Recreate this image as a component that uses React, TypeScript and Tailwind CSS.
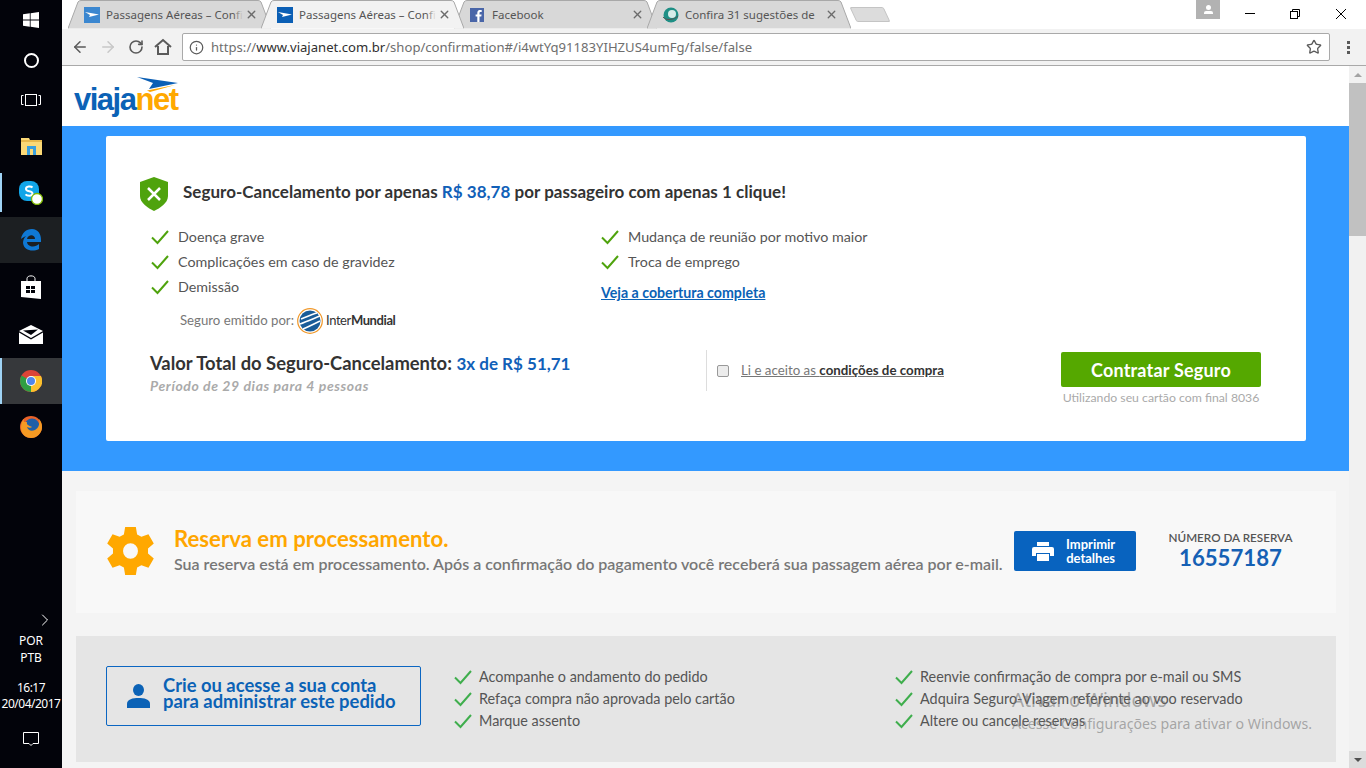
import React from "react";
import { ArrowLeft, ArrowRight, RotateCw, Info, Star, X, ChevronRight } from "lucide-react";

const UI = "font-['Lato','Liberation_Sans',sans-serif]";

function Check({ className = "text-[#4fa30d]" }: { className?: string }) {
  return (
    <svg width="18" height="16" viewBox="0 0 18 16" className={`shrink-0 ${className}`}>
      <path d="M1 8.5 L6.5 14 L17 2" fill="none" stroke="currentColor" strokeWidth="2" />
    </svg>
  );
}

function WindowsIcon() {
  return (
    <svg width="16" height="16" viewBox="0 0 16 16" fill="#fff">
      <path d="M0 2.3 6.8 1.3V7.5H0ZM7.6 1.2 16 0V7.5H7.6ZM0 8.4H6.8V14.7L0 13.7ZM7.6 8.4H16V16L7.6 14.8Z" />
    </svg>
  );
}

function TaskIcon({ h, bg = "", bar = "", children }: { h: string; bg?: string; bar?: string; children: React.ReactNode }) {
  return (
    <div className={`relative w-full flex items-center justify-center ${bg}`} style={{ height: h }}>
      {bar && <div className={`absolute left-0 w-[2px] bg-[#9fd3f5] ${bar}`} />}
      {children}
    </div>
  );
}

function Sidebar() {
  return (
    <div className="w-[62px] h-full shrink-0 bg-[#02030a] flex flex-col items-center text-white font-['Noto_Sans',sans-serif]">
      <div className="h-[40px] w-full flex items-center justify-center"><WindowsIcon /></div>
      <div className="h-[40px] w-full flex items-center justify-center">
        <div className="w-[15px] h-[15px] rounded-full border-2 border-white" />
      </div>
      <div className="h-[40px] w-full flex items-center justify-center">
        <svg width="20" height="14" viewBox="0 0 20 14" fill="none" stroke="#fff">
          <rect x="4.5" y="1.5" width="11" height="11" />
          <path d="M2.5 2.5H.5V11.5H2.5M17.5 2.5H19.5V11.5H17.5" />
        </svg>
      </div>
      <div className="h-[3px] shrink-0" />
      <TaskIcon h="46px">
        <svg width="21" height="18" viewBox="0 0 21 18">
          <path d="M0 1H8L9 3H21V18H0Z" fill="#fbd976" />
          <rect x="0" y="3" width="21" height="2" fill="#e8b94c" />
          <path d="M6 9H15V18H12V12H9V18H6Z" fill="#3aa0dd" />
        </svg>
      </TaskIcon>
      <TaskIcon h="48px" bar="top-[4px] bottom-[5px]">
        <svg width="24" height="24" viewBox="0 0 24 24">
          <rect x="0" y="0" width="20" height="20" rx="8" fill="#11a5e8" />
          <path d="M13.5 6.5C12 5 7 5 7 8c0 3 6.5 1.5 6.5 4.5 0 3-5.500 2.500-7 .8" fill="none" stroke="#fff" strokeWidth="2" />
          <circle cx="18" cy="18" r="5.500" fill="#fff" stroke="#7fba00" strokeWidth="1.300" />
        </svg>
      </TaskIcon>
      <TaskIcon h="46px" bg="bg-[#1c1f22]">
        <svg width="22" height="22" viewBox="0 0 22 22">
          <path d="M1 10C2 4 6 0 12 0c6 0 9 5 9 11v2H7c.500 5 8 6 12 2v5c-6 3-15 2-16-6 0-3 1-5 3-7-2 1-4 2-5 3Zm6 0h8c0-5-7-5-8 0Z" fill="#0f78d4" />
        </svg>
      </TaskIcon>
      <TaskIcon h="48px">
        <svg width="22" height="24" viewBox="0 0 22 24">
          <path d="M7 6V3.500C7 0 15 0 15 3.500V6" fill="none" stroke="#fff" />
          <path d="M1 6H21V24L1 22Z" fill="#fff" />
          <path d="M6 11H10V14H6ZM11 11H15V14H11ZM6 15H10V18H6ZM11 15H15V18H11Z" fill="#02030a" />
        </svg>
      </TaskIcon>
      <TaskIcon h="47px">
        <svg width="24" height="19" viewBox="0 0 24 19">
          <path d="M0 6 12 0 24 6 12 13Z" fill="#fff" />
          <path d="M0 7.500 12 14.500 24 7.500V19H0Z" fill="#fff" />
          <path d="M4 5.500 19 4.500 12 10Z" fill="#02030a" />
        </svg>
      </TaskIcon>
      <TaskIcon h="46px" bg="bg-[#36383b]" bar="top-0 bottom-0">
        <svg width="22" height="22" viewBox="0 0 22 22">
          <circle cx="11" cy="11" r="11" fill="#dc4437" />
          <path d="M11 11 1.500 5.500A11 11 0 0 0 11 22Z" fill="#2f9e44" />
          <path d="M11 11V22A11 11 0 0 0 21 6H11Z" fill="#fbc02d" />
          <circle cx="11" cy="11" r="5" fill="#fff" />
          <circle cx="11" cy="11" r="4" fill="#4f86ec" />
        </svg>
      </TaskIcon>
      <TaskIcon h="46px">
        <svg width="24" height="24" viewBox="0 0 24 24">
          <circle cx="12" cy="12" r="11" fill="#e8622a" />
          <circle cx="13" cy="11" r="7.500" fill="#1f5fa8" />
          <path d="M2 13C2 20 8 23 12 23c6 0 11-5 11-11 0-3-1-6-3-8 1 4 0 9-4 11-4 2-7 0-8-3 2 1 4 1 5 0-2-1-6-2-5-5L5 7C4 4 6 3 6 3 3 5 2 9 2 13Z" fill="#f59a23" />
        </svg>
      </TaskIcon>
      <div className="mt-auto flex flex-col items-center">
        <ChevronRight size={20} strokeWidth={1.200} className="ml-[28px] mb-[2px]" />
        <div className="text-[12px] leading-[17px] text-center">POR<br />PTB</div>
        <div className="text-[12px] leading-[16px] text-center mt-[14px] whitespace-nowrap tracking-[-0.5px]">16:17<br />20/04/2017</div>
        <svg width="16" height="16" viewBox="0 0 16 16" fill="none" stroke="#fff" className="mt-[19px] mb-[21px]">
          <path d="M.5 1.500H15.500V12.500H10L8 14.500 6 12.500H.5Z" />
        </svg>
      </div>
    </div>
  );
}

function Tab({ title, active, icon, width = 203 }: { title: string; active?: boolean; icon: React.ReactNode; width?: number }) {
  const fill = active ? "#f2f2f2" : "#d8d8d8";
  return (
    <div className={`relative h-[29px] -mr-[10px] flex items-center pl-[16px] pr-[13px] ${active ? "z-10" : ""}`} style={{ width }}>
      <svg className="absolute inset-0" width={width} height="29" viewBox={`0 0 ${width} 29`}>
        <path
          d={`M0 28.500 L10 2 Q11 .5 13 .5 H${width - 13} Q${width - 11} .5 ${width - 10} 2 L${width} 28.500`}
          fill={fill}
          stroke="#a8a8a8"
        />
      </svg>
      <div className="relative w-[16px] h-[16px] shrink-0">{icon}</div>
      <span className="relative ml-[6px] flex-1 overflow-hidden whitespace-nowrap text-[11.500px] text-[#555] font-['Noto_Sans',sans-serif]">
        {title}
        <span
          className="absolute right-0 top-0 bottom-0 w-[10px]"
          style={{ background: `linear-gradient(to right, ${fill}00, ${fill})` }}
        />
      </span>
      <X size={13} strokeWidth={2.500} className="relative shrink-0 ml-[2px] text-[#6b6b6b]" />
    </div>
  );
}

function PlaneFavicon({ bg }: { bg: string }) {
  return (
    <svg width="16" height="16" viewBox="0 0 16 16">
      <rect width="16" height="16" fill={bg} />
      <path d="M1 5 15 7.500 5 10 6 8Z" fill="#fff" />
      <path d="M1 5 5 7.500 6 8Z" fill="#f5b335" />
    </svg>
  );
}

function BrowserChrome() {
  return (
    <div className="shrink-0 bg-white">
      <div className="h-[29px] flex relative">
        <div className="flex pl-[6px] items-start">
          <Tab title="Passagens Aéreas – Confi" icon={<PlaneFavicon bg="#3b87d0" />} />
          <Tab title="Passagens Aéreas – Confi" active icon={<PlaneFavicon bg="#0b5fb5" />} />
          <Tab title="Facebook" icon={
            <svg width="16" height="16" viewBox="0 0 16 16">
              <rect width="14" height="14" y="1" fill="#4a66a8" />
              <path d="M9.500 15V9.500H11.300L11.600 7.400H9.500V6.100C9.500 5.400 9.800 5 10.600 5H11.700V3.100C10 2.800 7.300 2.800 7.300 5.800V7.400H5.600V9.500H7.300V15Z" fill="#fff" />
            </svg>
          } />
          <Tab title="Confira 31 sugestões de" width={204} icon={
            <svg width="16" height="16" viewBox="0 0 16 16">
              <circle cx="8" cy="8" r="7.500" fill="#1f8f85" />
              <circle cx="9" cy="7" r="4" fill="#d6ece8" />
              <path d="M0 10C3 14 11 13 15 9" fill="none" stroke="#555" />
            </svg>
          } />
          <div className="ml-[12px] mt-[7px] w-[34px] h-[15px] bg-[#dcdcdc] border border-[#c4c4c4] rounded-[2px] skew-x-[25deg]" />
        </div>
        <div className="ml-auto flex items-start mr-[2px]">
          <div className="w-[24px] h-[19px] bg-[#b2b2b2] flex flex-col items-center justify-center mr-[7px]">
            <div className="w-[5px] h-[5px] rounded-full bg-white" />
            <div className="w-[9px] h-[3px] mt-[1px] rounded-t-[2px] bg-white" />
          </div>
          <div className="w-[45px] h-[27px] flex items-center justify-center">
            <div className="w-[10px] h-[1px] bg-black" />
          </div>
          <div className="w-[46px] h-[27px] flex items-center justify-center">
            <svg width="10" height="10" viewBox="0 0 10 10" fill="none" stroke="#000">
              <rect x=".5" y="2.500" width="7" height="7" />
              <path d="M2.500 2.500V.5H9.500V7.500H7.500" />
            </svg>
          </div>
          <div className="w-[46px] h-[27px] flex items-center justify-center">
            <svg width="10" height="10" viewBox="0 0 10 10" stroke="#000"><path d="M0 0 10 10M10 0 0 10" /></svg>
          </div>
        </div>
      </div>
      <div className="h-[37px] bg-[#f2f2f2] border-b border-[#a9a9a9] flex items-center pl-[9px] pr-[16px]">
        <ArrowLeft size={18} strokeWidth={2} className="text-[#5a5a5a]" />
        <ArrowRight size={18} strokeWidth={2} className="ml-[10px] text-[#c8c8c8]" />
        <RotateCw size={16} strokeWidth={2.400} className="ml-[11px] text-[#5a5a5a]" />
        <svg width="18" height="18" viewBox="0 0 18 18" fill="none" stroke="#5a5a5a" strokeWidth="2" className="ml-[10px]">
          <path d="M1 9 9 2 17 9M4 8V16H14V8" />
        </svg>
        <div className="ml-[10px] flex-1 h-[28px] bg-white border border-[#a9a9a9] rounded-[2px] flex items-center pl-[6px] pr-[4px]">
          <Info size={15} strokeWidth={2} className="text-[#5a5a5a]" />
          <span className="ml-[7px] pt-[1px] text-[13.100px] text-[#6e6e6e] font-['Noto_Sans',sans-serif] whitespace-nowrap">
            https://<span className="text-[#303030]">www.viajanet.com.br</span>/shop/confirmation#/i4wtYq91183YIHZUS4umFg/false/false
          </span>
          <Star size={16} strokeWidth={2} className="ml-auto mr-[3px] text-[#5a5a5a]" />
        </div>
        <div className="ml-[17px] flex flex-col gap-[2px]">
          <div className="w-[3px] h-[3px] bg-[#5a5a5a]" />
          <div className="w-[3px] h-[3px] bg-[#5a5a5a]" />
          <div className="w-[3px] h-[3px] bg-[#5a5a5a]" />
        </div>
      </div>
    </div>
  );
}

function Logo() {
  return (
    <div className="relative h-[60px] w-[120px] ml-[12px]">
      <div className="absolute left-0 top-[14px] text-[31px] leading-[40px] font-bold tracking-[-1.500px] font-['Liberation_Sans',sans-serif]">
        <span className="text-[#0b62b6]">viaja</span><span className="text-[#ffa800]">net</span>
      </div>
      <svg width="42" height="15" viewBox="0 0 42 15" className="absolute left-[63px] top-[11px]">
        <path d="M0 0 41 6 12 12 16 6Z" fill="#0b5fb5" />
        <path d="M10 13.500 38 8 13 15Z" fill="#ffa800" />
      </svg>
    </div>
  );
}

function InsuranceCard() {
  return (
    <div className="bg-white rounded-[2px] h-[305px] pl-[34px] pr-[45px] pt-[41px]">
      <div className="flex items-center h-[33px]">
        <svg width="28" height="34" viewBox="0 0 28 34">
          <path d="M14 0 28 5V19C28 26 20 31 14 34 8 31 0 26 0 19V5Z" fill="#4fa30d" />
          <path d="M8 11 20 23M20 11 8 23" stroke="#fff" strokeWidth="2.500" />
        </svg>
        <h1 className="ml-[15px] mb-[4px] text-[17px] font-bold text-[#333] tracking-[0.02px]">
          Seguro-Cancelamento por apenas <span className="text-[#1160b8]">R$ 38,78</span> por passageiro com apenas 1 clique!
        </h1>
      </div>
      <div className="grid grid-cols-[450px_1fr] ml-[11px] mt-[14px] text-[14.300px] text-[#555]">
        <div className="flex flex-col">
          {["Doença grave", "Complicações em caso de gravidez", "Demissão"].map((t) => (
            <div key={t} className="h-[25px] flex items-center gap-[9px]"><Check />{t}</div>
          ))}
          <div className="flex items-center ml-[29px] mt-[9px] h-[25px] text-[13.200px] text-[#777]">
            Seguro emitido por:
            <svg width="26" height="26" viewBox="0 0 26 26" className="ml-[3px]">
              <circle cx="13" cy="13" r="12.300" fill="#fff" stroke="#f0982a" strokeWidth="1.200" />
              <circle cx="13" cy="13" r="10.500" fill="#1a5c98" />
              <path d="M4 11C9 9 16 6 20 5M3 16C9 14 18 10 23 8M6 21C11 19 19 15 23 13" stroke="#fff" strokeWidth="1.500" fill="none" />
            </svg>
            <span className="ml-[3px] text-[13px] tracking-[-0.4px] text-[#333]">Inter<b>Mundial</b></span>
          </div>
        </div>
        <div className="flex flex-col">
          {["Mudança de reunião por motivo maior", "Troca de emprego"].map((t) => (
            <div key={t} className="h-[25px] flex items-center gap-[9px]"><Check />{t}</div>
          ))}
          <a className="mt-[6px] h-[25px] flex items-center text-[14.200px] font-bold text-[#0b62b6] underline">Veja a cobertura completa</a>
        </div>
      </div>
      <div className="flex items-start ml-[10px] mt-[18px]">
        <div className="w-[556px]">
          <div className="text-[18.400px] leading-[24px] font-bold text-[#333] whitespace-nowrap">
            Valor Total do Seguro-Cancelamento: <span className="text-[17px] text-[#1160b8]">3x de R$ 51,71</span>
          </div>
          <div className="-mt-[1px] text-[14px] tracking-[0.6px] font-bold italic text-[#aaa]">Período de 29 dias para 4 pessoas</div>
        </div>
        <div className="w-[355px] h-[41px] -mt-[1px] border-l border-[#ddd] flex items-center pl-[10px]">
          <div className="w-[12px] h-[12px] mt-[1px] rounded-[2px] bg-[#ececec] border border-[#999]" />
          <span className="ml-[12px] text-[13.300px] text-[#777] underline">Li e aceito as <span className="font-bold text-[#333]">condições de compra</span></span>
        </div>
        <div className="w-[200px] mt-[1px]">
          <button className="w-full h-[35px] pt-[1px] rounded-[2px] bg-[#55a800] text-white text-[18px] tracking-[0.2px] font-bold">Contratar Seguro</button>
          <div className="mt-[2px] text-center whitespace-nowrap text-[12.250px] text-[#aaa]">Utilizando seu cartão com final 8036</div>
        </div>
      </div>
    </div>
  );
}

function ReservationCard() {
  return (
    <div className="h-[122px] bg-[#f8f8f8] flex items-center pl-[31px] pr-[43px]">
      <svg width="47" height="48" viewBox="1 1 22 22" preserveAspectRatio="none" className="shrink-0 mb-[3px]">
        <path
          fillRule="evenodd"
          d="M9.500 0h5l.6 3.400 2 1.100L20.400 3.300l2.500 4.300-2.700 2.200v2.400l2.700 2.200-2.500 4.300-3.300-1.200-2 1.100-.6 3.400h-5l-.6-3.400-2-1.100-3.300 1.200L1.100 14.400l2.700-2.200V9.800L1.100 7.600 3.600 3.300l3.300 1.200 2-1.100ZM12 7.500a3.500 3.500 0 1 0 0 7 3.500 3.500 0 0 0 0-7Z"
          fill="#ffa800"
          transform="translate(0 1)"
        />
      </svg>
      <div className="ml-[20px] mb-[1px]">
        <div className="text-[22.200px] leading-[24px] font-bold text-[#ffa600]">Reserva em processamento.</div>
        <div className="text-[16px] leading-[26px] font-semibold text-[#777] whitespace-nowrap">
          Sua reserva está em processamento. Após a confirmação do pagamento você receberá sua passagem aérea por e-mail.
        </div>
      </div>
      <button className="ml-auto mb-[2px] w-[122px] h-[40px] shrink-0 rounded-[2px] bg-[#0863bf] text-white flex items-center pl-[18px]">
        <svg width="22" height="19" viewBox="0 0 22 19" fill="#fff">
          <path d="M5 0H17V4H5ZM2 5H20Q22 5 22 7V14H18V11H4V14H0V7Q0 5 2 5ZM5 12H17V19H5Z" />
        </svg>
        <span className="ml-[12px] text-[13px] leading-[14px] font-bold text-center">Imprimir<br />detalhes</span>
      </button>
      <div className="ml-[32px] mb-[3px] w-[125px] text-center shrink-0">
        <div className="text-[11.700px] leading-[14px] font-semibold text-[#555] whitespace-nowrap">NÚMERO DA RESERVA</div>
        <div className="text-[22.200px] leading-[27px] font-bold text-[#1560b4]">16557187</div>
      </div>
    </div>
  );
}

function BenefitList({ items, className }: { items: string[]; className: string }) {
  return (
    <div className={`flex flex-col text-[14.400px] text-[#555] ${className}`}>
      {items.map((t) => (
        <div key={t} className="h-[22px] flex items-center gap-[7px] whitespace-nowrap">
          <Check className="text-[#3fae4d]" />{t}
        </div>
      ))}
    </div>
  );
}

function AccountCard() {
  return (
    <div className="h-[126px] bg-[#e5e5e5] flex items-start pl-[30px] pt-[30px]">
      <button className="w-[315px] h-[60px] shrink-0 border border-[#0b66c2] rounded-[2px] flex items-center pl-[20px] text-[#0b62b6]">
        <svg width="23" height="24" viewBox="0 0 23 24" fill="currentColor" className="shrink-0">
          <ellipse cx="11.500" cy="6" rx="5.500" ry="6" />
          <path d="M0 24V20C0 15 6 14 11.500 14S23 15 23 20V24Z" />
        </svg>
        <span className="ml-[13px] mb-[6px] text-[18.400px] leading-[16px] font-bold text-left whitespace-nowrap">Crie ou acesse a sua conta<br />para administrar este pedido</span>
      </button>
      <BenefitList className="ml-[33px] w-[441px]" items={["Acompanhe o andamento do pedido", "Refaça compra não aprovada pelo cartão", "Marque assento"]} />
      <BenefitList className="" items={["Reenvie confirmação de compra por e-mail ou SMS", "Adquira Seguro-Viagem referente ao voo reservado", "Altere ou cancele reservas"]} />
    </div>
  );
}

function Scrollbar() {
  return (
    <div className="w-[17px] shrink-0 bg-[#f1f1f1] flex flex-col">
      <div className="h-[17px] flex items-center justify-center">
        <div className="w-0 h-0 border-x-[4px] border-x-transparent border-b-[4px] border-b-[#a3a3a3]" />
      </div>
      <div className="h-[153px] bg-[#c1c1c1]" />
      <div className="mt-auto h-[17px] bg-[#dcdcdc] flex items-center justify-center">
        <div className="w-0 h-0 border-x-[4px] border-x-transparent border-t-[4px] border-t-[#505050]" />
      </div>
    </div>
  );
}

export default function App() {
  return (
    <div className={`relative w-[1366px] h-[768px] overflow-hidden flex ${UI}`}>
      <Sidebar />
      <div className="flex-1 min-w-0 flex flex-col">
        <BrowserChrome />
        <div className="flex-1 min-h-0 flex">
          <main className="flex-1 min-w-0 bg-[#f4f4f4] overflow-hidden">
            <div className="h-[60px] bg-white"><Logo /></div>
            <section className="h-[345px] bg-[#3399ff] pl-[44px] pr-[43px] pt-[10px]">
              <InsuranceCard />
            </section>
            <div className="pl-[14px] pr-[13px] pt-[20px] flex flex-col gap-[23px]">
              <ReservationCard />
              <AccountCard />
            </div>
          </main>
          <Scrollbar />
        </div>
      </div>
      <div className="absolute left-[1012px] top-[689px] text-[rgba(110,110,110,0.55)] font-['Noto_Sans',sans-serif] pointer-events-none">
        <div className="text-[19px] leading-[23px]">Ativar o Windows</div>
        <div className="text-[14.150px] leading-[24px] whitespace-nowrap">Acesse Configurações para ativar o Windows.</div>
      </div>
    </div>
  );
}
